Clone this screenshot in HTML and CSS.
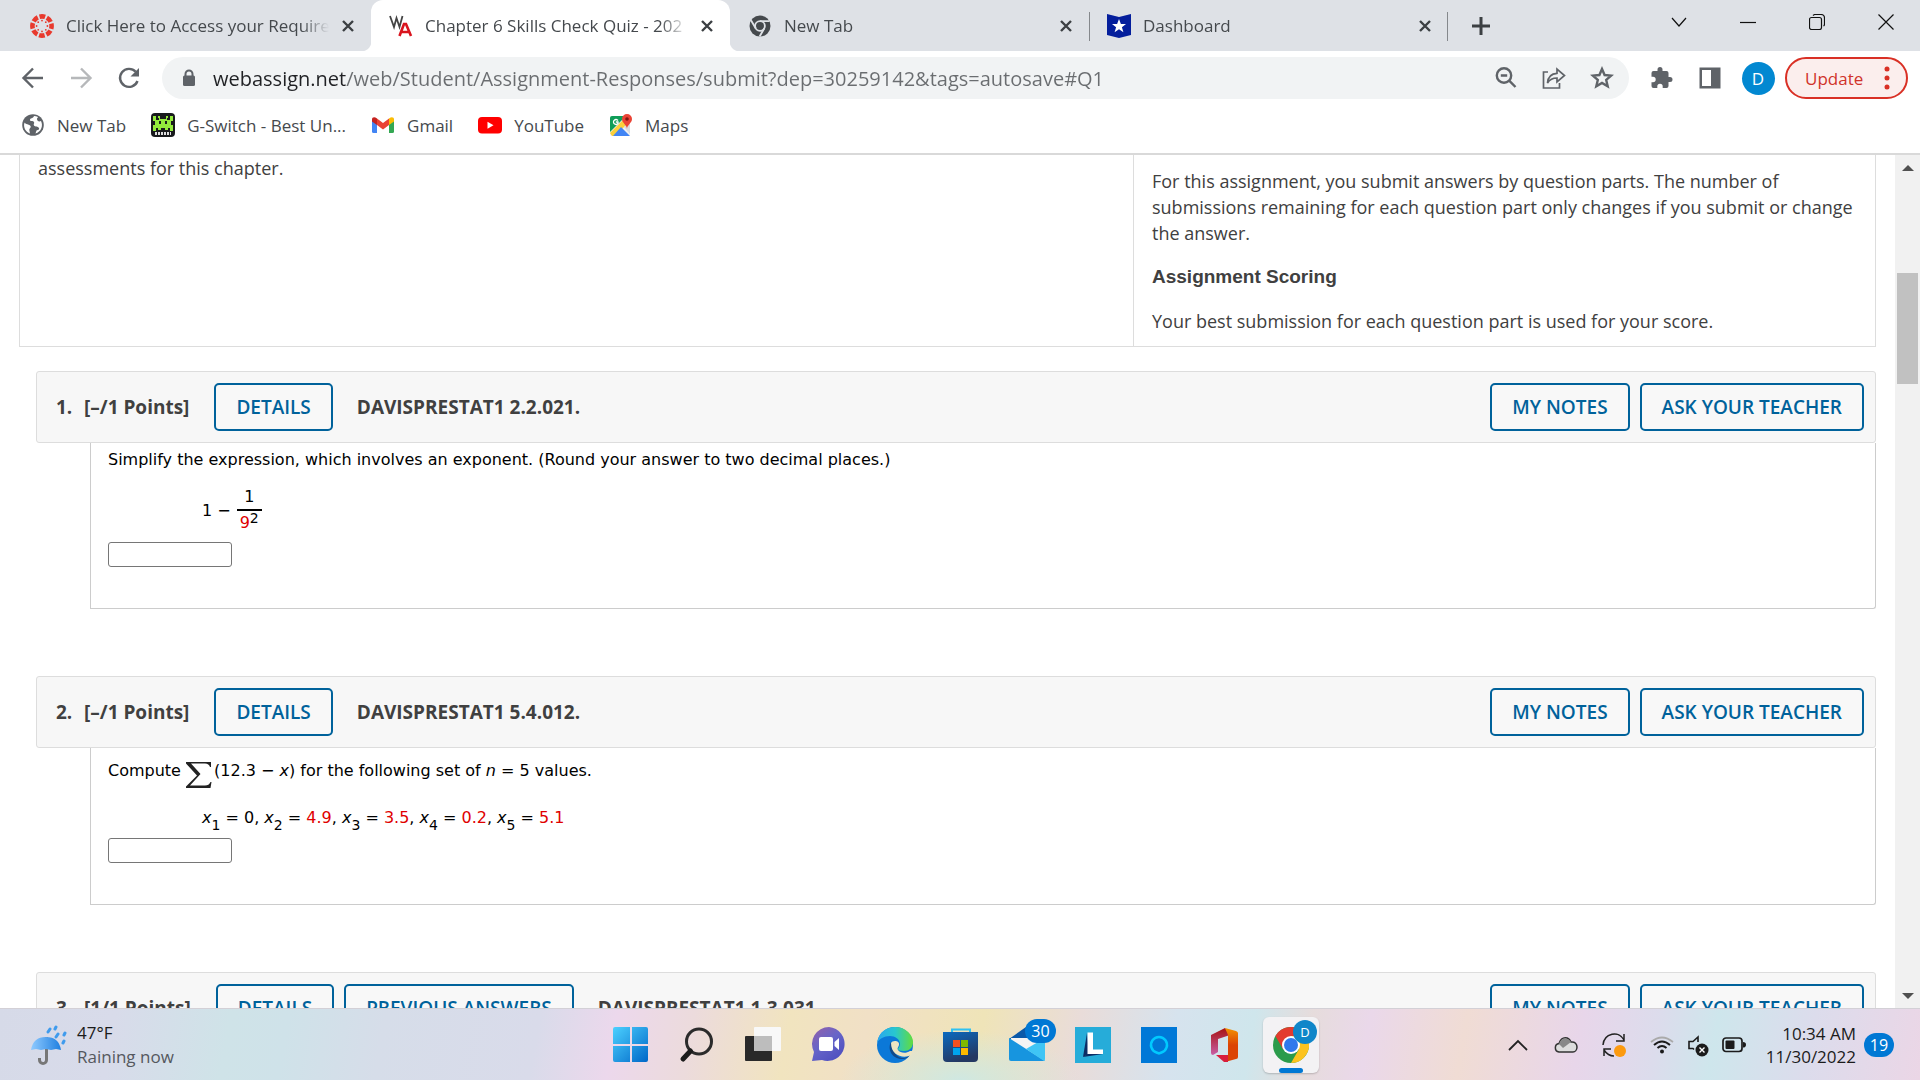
FILE: index.html
```html
<!DOCTYPE html>
<html lang="en">
<head>
<meta charset="utf-8">
<title>Chapter 6 Skills Check Quiz</title>
<link rel="stylesheet" href="styles.css">
</head>
<body>
<header class="browser">
  <nav class="tabstrip" aria-label="Tabs">
    <div class="tab">
      <svg class="icon24" viewBox="0 0 24 24"><circle cx="12" cy="12" r="9.6" fill="none" stroke="#e8392d" stroke-width="4.600" stroke-dasharray="5.700 1.840" stroke-dashoffset="2.800"/><g fill="#e8392d"><circle cx="12" cy="6.600" r=".9"/><circle cx="12" cy="17.400" r=".9"/><circle cx="6.600" cy="12" r=".9"/><circle cx="17.400" cy="12" r=".9"/><circle cx="8.200" cy="8.200" r=".9"/><circle cx="15.800" cy="8.200" r=".9"/><circle cx="8.200" cy="15.800" r=".9"/><circle cx="15.800" cy="15.800" r=".9"/></g></svg>
      <span class="tab-title">Click Here to Access your Require</span>
      <button class="tab-close" aria-label="Close tab"><svg viewBox="0 0 14 14"><path d="M2 2l10 10M12 2L2 12"/></svg></button>
    </div>
    <div class="tab active">
      <svg class="icon24" viewBox="0 0 24 24"><path d="M1 2l4 11 2.500-9 3 9 3-11" fill="none" stroke="#444" stroke-width="1.800"/><path d="M10.500 22l4.500-12h2l5 12M12 18h8" fill="none" stroke="#d9141e" stroke-width="2.600"/></svg>
      <span class="tab-title">Chapter 6 Skills Check Quiz - 202</span>
      <button class="tab-close" aria-label="Close tab"><svg viewBox="0 0 14 14"><path d="M2 2l10 10M12 2L2 12"/></svg></button>
    </div>
    <div class="tab">
      <svg class="icon24" viewBox="0 0 24 24"><circle cx="12" cy="12" r="10.500" fill="#45494d"/><circle cx="12" cy="12" r="4.900" fill="none" stroke="#dee1e6" stroke-width="1.800"/><path d="M12 7.100h9.500M7.800 14.500L3 6.300M16.200 14.500L11.600 22.500" stroke="#dee1e6" stroke-width="1.800"/></svg>
      <span class="tab-title">New Tab</span>
      <button class="tab-close" aria-label="Close tab"><svg viewBox="0 0 14 14"><path d="M2 2l10 10M12 2L2 12"/></svg></button>
    </div>
    <div class="tab divided">
      <svg class="icon24" viewBox="0 0 24 24"><path d="M0 0l12 3 12-3v21l-12 3-12-3z" fill="#041e9c"/><path d="M12 5l1.900 5h5.100l-4.100 3.200 1.500 5.100-4.400-3-4.400 3 1.500-5.100L5 10h5.100z" fill="#fff"/></svg>
      <span class="tab-title">Dashboard</span>
      <button class="tab-close" aria-label="Close tab"><svg viewBox="0 0 14 14"><path d="M2 2l10 10M12 2L2 12"/></svg></button>
    </div>
    <button class="new-tab" aria-label="New tab"><svg viewBox="0 0 18 18"><path d="M9 0v18M0 9h18"/></svg></button>
    <div class="window-controls">
      <button aria-label="Search tabs"><svg viewBox="0 0 16 16"><path d="M1 4l7 8 7-8"/></svg></button>
      <button aria-label="Minimize"><svg viewBox="0 0 16 16"><path d="M0 8.500h16"/></svg></button>
      <button aria-label="Restore"><svg viewBox="0 0 16 16"><rect x=".5" y="3.500" width="12" height="12" rx="2"/><path d="M4 1.500q1-1 2-1h6q3.500 0 3.500 3.500v6q0 1.500-1 2"/></svg></button>
      <button aria-label="Close"><svg viewBox="0 0 16 16"><path d="M.5.5l15 15M15.500.5l-15 15"/></svg></button>
    </div>
  </nav>

  <div class="toolbar">
    <button class="tool" aria-label="Back"><svg viewBox="0 0 24 24"><path class="line" d="M22 12H3M12 2.500L2.500 12l9.500 9.500"/></svg></button>
    <button class="tool faded" aria-label="Forward"><svg viewBox="0 0 24 24"><path class="line" d="M2 12h19M12 2.500l9.500 9.500-9.500 9.500"/></svg></button>
    <button class="tool" aria-label="Reload"><svg viewBox="0 0 24 24"><path class="line" d="M20.500 15a9 9 0 1 1-1.800-9.200"/><path class="solid" d="M22 2v8.500h-8.500z"/></svg></button>
    <div class="omnibox">
      <svg class="lock" viewBox="0 0 14 18"><path d="M3.500 8V5a3.500 3.500 0 0 1 7 0v3" fill="none" stroke="#5f6368" stroke-width="2"/><rect x="1" y="6.500" width="12" height="10.500" rx="1.500" fill="#5f6368"/></svg>
      <input class="url" type="text" aria-label="Address" value="webassign.net/web/Student/Assignment-Responses/submit?dep=30259142&amp;tags=autosave#Q1">
      <button class="tool" aria-label="Zoom"><svg viewBox="0 0 24 24"><circle class="line" cx="10" cy="9.500" r="7.200"/><path class="line" d="M15.200 14.700l6.300 6.300M6.800 9.500h6.400"/></svg></button>
      <button class="tool" aria-label="Share"><svg viewBox="0 0 24 24"><path class="thin" d="M6 6H1.500v16h16v-5"/><path class="thin" d="M5.500 17c.5-6 4-9.500 9.500-9.700V3l7.500 6.500-7.500 6.500v-4c-4 0-7 1-9.500 5z"/></svg></button>
      <button class="tool" aria-label="Bookmark"><svg viewBox="0 0 24 24"><path class="line" d="M12 3l2.600 6 6.500.6-4.900 4.300 1.500 6.400-5.700-3.400-5.700 3.400 1.500-6.400-4.900-4.300 6.500-.6z"/></svg></button>
    </div>
    <button class="tool" aria-label="Extensions"><svg viewBox="0 0 24 24"><path class="solid" d="M20 11h-1.500V7a2 2 0 0 0-2-2h-4V3.500a2.500 2.500 0 0 0-5 0V5h-4a2 2 0 0 0-2 2v3.800H3a2.700 2.700 0 0 1 0 5.400H1.500V20a2 2 0 0 0 2 2h3.800v-1.500a2.700 2.700 0 0 1 5.400 0V22h3.800a2 2 0 0 0 2-2v-4H20a2.500 2.500 0 0 0 0-5z"/></svg></button>
    <button class="tool" aria-label="Side panel"><svg viewBox="0 0 24 24"><path class="solid" fill-rule="evenodd" d="M1.500 1.500h21v21h-21zM4 4v16h9V4z"/></svg></button>
    <button class="tool" aria-label="Profile"><span class="avatar">D</span></button>
    <button class="update">Update<svg viewBox="0 0 6 24"><circle cx="3" cy="3" r="2.500"/><circle cx="3" cy="12" r="2.500"/><circle cx="3" cy="21" r="2.500"/></svg></button>
  </div>

  <nav class="bookmarks" aria-label="Bookmarks">
    <a href="#newtab"><svg class="icon24" viewBox="0 0 24 24"><circle cx="12" cy="12" r="10.800" fill="#5f6368"/><path d="M3.500 9.500c1 2 4.500 1.500 6 3.500 1 2-2 2-1 5l.5 2.500C4.500 19 2 14 3.500 9.500zM13 3c-1 3-4 1.500-4 4 0 2 3 .5 4 2 .8 1.500-1 2 0 3.500s4 .5 5 2.500c.7 1.500-1 2-2.500 2.500l-1 3C20 19 22.500 13 20 8c-2 1-4 0-4-2 0-1 1-1.500 1-2q-2-1-4-1z" fill="#fff"/></svg>New Tab</a>
    <a href="#gswitch"><svg class="icon24" viewBox="0 0 24 24"><rect width="24" height="24" rx="4" fill="#18191c"/><path d="M2 3h3v4h3V5H7V3h2v3h6V3h2v2h-1v2h3V3h3v5h-2v4h2v6h-3v-3h-2v2h-3v-2h-4v2H7v-2H5v3H2v-6h2V8H2z" fill="#93ea3c"/><path d="M8 8h2v3H8zm6 0h2v3h-2z" fill="#18191c"/><path d="M4 20.500h16" stroke="#ddd" stroke-width="3" stroke-dasharray="2 1"/></svg>G-Switch - Best Un...</a>
    <a href="#gmail"><svg class="icon24" viewBox="0 0 24 24"><path d="M1 6v12.500Q1 20 2.500 20H6V9z" fill="#4285f4"/><path d="M18 9v11h3.500q1.500 0 1.500-1.500V6z" fill="#34a853"/><path d="M6 5.500l6 4.500 6-4.500V12l-6 4.500L6 12z" fill="#ea4335"/><path d="M1 6.500C1 4 3.500 3.500 6 5.500V12L1 8.500z" fill="#c5221f"/><path d="M23 6.500c0-2.500-2.500-3-5-1V12l5-3.500z" fill="#fbbc04"/></svg>Gmail</a>
    <a href="#youtube"><svg class="icon24" viewBox="0 0 24 24"><rect y="4" width="24" height="16.500" rx="4" fill="red"/><path d="M9.500 8.700v7l6-3.500z" fill="#fff"/></svg>YouTube</a>
    <a href="#maps"><svg class="icon24" viewBox="0 0 24 24"><rect x="1" y="3" width="20" height="20" rx="2" fill="#f1f1f1"/><path d="M3 3h14L1 19V5q0-2 2-2z" fill="#0f9d58"/><path d="M1 20L17 4l4 4L6 23H3z" fill="#fbd03b"/><path d="M12 14l9 9H4z" fill="#4285f4"/><path d="M21 10v11l-6-7z" fill="#dadce0"/><path d="M18 16c0-4-5-6-5-10a5 5 0 0 1 10 0c0 4-5 6-5 10z" fill="#ea4335"/><circle cx="18" cy="6" r="1.800" fill="#811411"/><path d="M9 7.500a2.500 2.500 0 1 0 0 3V9H6.800" fill="none" stroke="#fff" stroke-width="1.300"/></svg>Maps</a>
  </nav>
</header>

<div class="viewport">
  <main class="page">
    <section class="intro">
      <div class="intro-left"><p>assessments for this chapter.</p></div>
      <div class="intro-right">
        <p>For this assignment, you submit answers by question parts. The number of submissions remaining for each question part only changes if you submit or change the answer.</p>
        <h2>Assignment Scoring</h2>
        <p>Your best submission for each question part is used for your score.</p>
      </div>
    </section>

    <section class="question">
      <header class="q-head">
        <span class="q-num">1.</span><span class="q-points">[–/1 Points]</span>
        <div class="q-actions"><button class="btn">DETAILS</button></div>
        <h3>DAVISPRESTAT1 2.2.021.</h3>
        <div class="q-tools"><button class="btn">MY NOTES</button><button class="btn">ASK YOUR TEACHER</button></div>
      </header>
      <div class="q-body">
        <label class="prompt" for="answer1">Simplify the expression, which involves an exponent. (Round your answer to two decimal places.)</label>
        <div class="expression">1 −<span class="fraction"><span class="numerator">1</span><span class="denominator"><span class="given">9</span><sup>2</sup></span></span></div>
        <input class="answer" id="answer1" type="text">
      </div>
    </section>

    <section class="question">
      <header class="q-head">
        <span class="q-num">2.</span><span class="q-points">[–/1 Points]</span>
        <div class="q-actions"><button class="btn">DETAILS</button></div>
        <h3>DAVISPRESTAT1 5.4.012.</h3>
        <div class="q-tools"><button class="btn">MY NOTES</button><button class="btn">ASK YOUR TEACHER</button></div>
      </header>
      <div class="q-body">
        <label class="prompt tall" for="answer2">Compute <svg class="sigma" viewBox="0 0 26 26"><path d="M0 0h25v5h-1q-1-3.500-5-3.500H5L14.500 12 4 23.500h15q4 0 5.500-3.500h1l-1 6H0v-1.500L11 13.500 0 1.500z" fill="#222"/></svg>(12.3 − <i>x</i>) for the following set of <i>n</i> = 5 values.</label>
        <div class="values"><i>x</i><sub>1</sub> = 0, <i>x</i><sub>2</sub> = <span class="given">4.9</span>, <i>x</i><sub>3</sub> = <span class="given">3.5</span>, <i>x</i><sub>4</sub> = <span class="given">0.2</span>, <i>x</i><sub>5</sub> = <span class="given">5.1</span></div>
        <input class="answer" id="answer2" type="text">
      </div>
    </section>

    <section class="question">
      <header class="q-head">
        <span class="q-num">3.</span><span class="q-points">[1/1 Points]</span>
        <div class="q-actions"><button class="btn">DETAILS</button><button class="btn">PREVIOUS ANSWERS</button></div>
        <h3>DAVISPRESTAT1 1.3.031.</h3>
        <div class="q-tools"><button class="btn">MY NOTES</button><button class="btn">ASK YOUR TEACHER</button></div>
      </header>
    </section>
  </main>
  <div class="scrollbar" aria-hidden="true">
    <span class="arrow up"></span><span class="track-before"></span><span class="thumb"></span><span class="track-after"></span><span class="arrow down"></span>
  </div>
</div>

<footer class="taskbar">
  <div class="weather">
    <svg viewBox="0 0 36 40"><defs><linearGradient id="umb"><stop offset="0" stop-color="#8fcaff"/><stop offset="1" stop-color="#1e7fe0"/></linearGradient></defs><path d="M15.500 12v23a3.500 3.500 0 0 1-7 0v-2" fill="none" stroke="#777" stroke-width="3"/><path d="M0 25Q2 12 15 12t15 13l-5-1-5 1-5-1-5 1-5-1z" fill="url(#umb)"/><path d="M17 7l2-3M24 4l1-2M25 12l2-3M33 10l1-2M32 18l1-2" stroke="#3f9bed" stroke-width="3" stroke-linecap="round"/></svg>
    <div><div class="temp">47°F</div><div class="condition">Raining now</div></div>
  </div>
  <div class="apps">
    <button aria-label="Start"><svg viewBox="0 0 36 36"><defs><linearGradient id="win" x2="1" y2="1"><stop stop-color="#4cd1ff"/><stop offset="1" stop-color="#0067c8"/></linearGradient></defs><path d="M2 0h15v17H0V2q0-2 2-2zm17 0h14q2 0 2 2v15H19zM0 19h17v16H2q-2 0-2-2zm19 0h16v14q0 2-2 2H19z" fill="url(#win)"/></svg></button>
    <button aria-label="Search"><svg viewBox="0 0 36 36"><circle cx="20" cy="14.500" r="12.500" fill="none" stroke="#2b2b2b" stroke-width="3"/><path d="M11.500 24L4 32" stroke="#1b1b1b" stroke-width="5" stroke-linecap="round"/></svg></button>
    <button aria-label="Task view"><svg viewBox="0 0 36 36"><rect y="9" width="27" height="25" rx="1" fill="#292929"/><rect x="9" width="27" height="24" rx="1" fill="#f8f8f8"/><path d="M9 9h18v15H9z" fill="#bdbdbd"/></svg></button>
    <button aria-label="Chat"><svg viewBox="0 0 36 36"><defs><linearGradient id="chat" x2=".7" y2="1"><stop stop-color="#9560a8"/><stop offset=".5" stop-color="#6765c8"/><stop offset="1" stop-color="#4f50c0"/></linearGradient></defs><path d="M18 0a17 17 0 1 1-7 33L1 34l2-9A17 17 0 0 1 18 0z" fill="url(#chat)"/><rect x="8" y="10" width="14" height="14" rx="2" fill="#fff"/><path d="M23.500 15l4.500-4v12l-4.500-4z" fill="#fff"/></svg></button>
    <button aria-label="Edge"><svg viewBox="0 0 36 36"><defs><linearGradient id="edge1"><stop stop-color="#2aa6f0"/><stop offset=".5" stop-color="#28c6d0"/><stop offset="1" stop-color="#62dd3c"/></linearGradient></defs><circle cx="18" cy="18" r="18" fill="#0b78d8"/><path d="M0 16C2 5 9 0 18 0c11 0 18 8 18 15 0 6-4 9-9 9-4 0-6-1-6-2s2-2 2-5c0-5-5-8-10-8C7 9 2 12 0 16z" fill="url(#edge1)"/><path d="M14 15c-4 7 1 17 11 17 4 0 7-2 8-5-5 8-17 3-16-7z" fill="#114a8b"/><path d="M14 16c1-3 9-3 8 2-1 3-2 3-1 5 2 3 8 4 12 1l3 0-2 4c-7 4-20 1-20-12z" fill="#eee5c2"/></svg></button>
    <button aria-label="Store"><svg viewBox="0 0 36 36"><defs><linearGradient id="store" x2=".4" y2="1"><stop stop-color="#0b6ac0"/><stop offset="1" stop-color="#243862"/></linearGradient></defs><path d="M9 7V2.500h18V7" fill="none" stroke="#2fc1f2" stroke-width="2"/><path d="M0 5h35v26q0 4-4 4H4q-4 0-4-4z" fill="url(#store)"/><path d="M10 13h7v7h-7z" fill="#f25022"/><path d="M18 13h7v7h-7z" fill="#7fba00"/><path d="M10 21h7v7h-7z" fill="#00a4ef"/><path d="M18 21h7v7h-7z" fill="#ffb900"/></svg></button>
    <button aria-label="Mail"><svg viewBox="0 0 36 36"><path d="M0 12L17 0l19 12z" fill="#0a59a9"/><path d="M2 11h32v14H2z" fill="#f4f4f4"/><path d="M0 11l36 23H2q-2 0-2-2z" fill="#1795df"/><path d="M36 11v21q0 2-1 2L17 22z" fill="#3fc5f5"/></svg><span class="count mail-count">30</span></button>
    <button aria-label="L"><svg viewBox="0 0 36 36"><path d="M0 0h36v36H0z" fill="#26acd9"/><path d="M12 6L8 30l6-3z" fill="#0c2d66"/><path d="M8 30l20-3H13z" fill="#0c2d66"/><path d="M12.500 5.500h5.500v17h10v4.500H12.500z" fill="#fff"/></svg></button>
    <button aria-label="Alexa"><svg viewBox="0 0 36 36"><path d="M0 0h36v36H0z" fill="#0078d7"/><path d="M15.500 25.500a8 8 0 1 1 5 0l-2.500 1z" fill="none" stroke="#00caff" stroke-width="2.500"/></svg></button>
    <button aria-label="Office"><svg viewBox="0 0 36 36"><defs><linearGradient id="off" x2="0" y2="1"><stop stop-color="#a71313"/><stop offset="1" stop-color="#c85fa5"/></linearGradient><linearGradient id="off2" x2="0" y2="1"><stop stop-color="#f39200"/><stop offset=".5" stop-color="#dc4404"/></linearGradient></defs><path d="M4 8L18 1l5 7-12 4v13l-5 3q-2 0-2-2z" fill="url(#off)"/><path d="M18 1l11 3q2 1 2 2v24q0 2-2 2l-11 3 3-7V8z" fill="url(#off2)"/><path d="M9 28h12v7h-4z" fill="#d81e3c"/></svg></button>
    <button class="running" aria-label="Chrome"><svg viewBox="0 0 36 36"><circle cx="18" cy="18" r="18" fill="#2b9b4b"/><path d="M2.400 9A18 18 0 0 1 33.600 9H18l-7.800 13.500z" fill="#e33b2e"/><path d="M33.600 9A18 18 0 0 1 18 36l7.800-13.500L18 9z" fill="#fcc31e"/><circle cx="18" cy="18" r="9" fill="#fff"/><circle cx="18" cy="18" r="7" fill="#3079ec"/></svg><span class="count profile-count">D</span></button>
  </div>
  <div class="tray">
    <svg viewBox="0 0 24 24"><path d="M3 17l9-9 9 9" fill="none" stroke="#222" stroke-width="1.800"/></svg>
    <svg viewBox="0 0 24 24"><path d="M5 19a4.300 4.300 0 0 1 0-8.500C8 2 15 4 17 9c4-.5 6 2 6 5 0 3-2 5-4 5z" fill="#ddd" stroke="#333" stroke-width="1.500"/><path d="M5 11c2-7 9-7 12-2l-8 6z" fill="#888"/></svg>
    <svg viewBox="0 0 24 24"><path d="M1 12C2 0 17-3 22 7M22 1v7h-8M12 23q-6 0-10-6M2 23v-7h7" fill="none" stroke="#222" stroke-width="1.500"/><circle cx="18" cy="18" r="6" fill="#fc9a0f"/></svg>
    <button class="network" aria-label="Network, sound and battery">
      <svg viewBox="0 0 24 24"><path d="M1 9q11-9 22 0" fill="none" stroke="#aaa" stroke-width="1.700"/><path d="M4 12q8-7 16 0M7.500 15q4.500-4 9 0" fill="none" stroke="#1b1b1b" stroke-width="2"/><circle cx="12" cy="18.500" r="2" fill="#1b1b1b"/></svg>
      <svg viewBox="0 0 24 24"><path d="M12 9V4L7 8.500H3v7h4l1 1" fill="none" stroke="#1b1b1b" stroke-width="1.600"/><circle cx="16" cy="17" r="6.500" fill="#1b1b1b"/><path d="M13.500 14.500l5 5m0-5l-5 5" stroke="#fff" stroke-width="1.400"/></svg>
      <svg viewBox="0 0 24 24"><rect x="1" y="5" width="19" height="13.500" rx="3" fill="none" stroke="#1b1b1b" stroke-width="1.700"/><rect x="3.500" y="7.500" width="9" height="8.500" rx="1" fill="#1b1b1b"/><path d="M21 9q3 0 3 2.800t-3 2.800z" fill="#1b1b1b"/></svg>
    </button>
    <div class="clock"><time>10:34 AM</time><time>11/30/2022</time></div>
    <span class="count notices">19</span>
  </div>
</footer>
</body>
</html>
```
FILE: styles.css
```css
* { box-sizing: border-box; }

body {
  margin: 0;
  height: 100vh;
  display: flex;
  flex-direction: column;
  overflow: hidden;
  background: #fff;
  color: #404040;
  font-family: "Open Sans", "Noto Sans", sans-serif;
  font-size: 17px;
}

button {
  border: 0;
  padding: 0;
  background: none;
  color: inherit;
  font: inherit;
}

svg { display: block; flex: none; }
p, h2, h3 { margin: 0; }
.icon24 { width: 24px; height: 24px; }

/* Browser chrome */
.browser {
  flex: none;
  border-bottom: 2px solid #d9d9d9;
}

.tabstrip {
  display: flex;
  align-items: stretch;
  height: 51px;
  padding-left: 12px;
  background: #dee1e6;
}

.tab {
  position: relative;
  flex: 0 1 359px;
  display: flex;
  align-items: center;
  gap: 12px;
  min-width: 0;
  padding: 0 16px 0 18px;
  color: #45494d;
}

.tab.active {
  background: #fff;
  border-radius: 12px 12px 0 0;
}

.tab.active::before,
.tab.active::after {
  content: "";
  position: absolute;
  bottom: 0;
  width: 10px;
  height: 10px;
}

.tab.active::before { left: -10px; background: radial-gradient(circle at 0 0, #dee1e6 10px, #fff 11px); }
.tab.active::after { right: -10px; background: radial-gradient(circle at 100% 0, #dee1e6 10px, #fff 11px); }

.tab.divided::before,
.tab.divided::after {
  content: "";
  position: absolute;
  top: 12px;
  bottom: 10px;
  width: 1px;
  background: #85888c;
}

.tab.divided::before { left: 0; }
.tab.divided::after { right: 0; }

.tab-title {
  flex: 1;
  min-width: 0;
  overflow: hidden;
  white-space: nowrap;
  mask-image: linear-gradient(to left, transparent, #000 28px);
}

.tab-close svg { width: 14px; height: 14px; stroke: #3c4043; stroke-width: 2.4; }
.new-tab { width: 66px; display: grid; place-items: center; }
.new-tab svg { width: 18px; height: 18px; stroke: #3c4043; stroke-width: 3; }

.window-controls {
  margin-left: auto;
  display: flex;
  height: 44px;
}

.window-controls button { width: 69px; display: grid; place-items: center; }
.window-controls svg { width: 16px; height: 16px; fill: none; stroke: #111; stroke-width: 1.2; }

.toolbar {
  display: flex;
  align-items: center;
  height: 54px;
  padding: 0 12px 0 9px;
}

.tool { flex: none; width: 48px; height: 42px; display: grid; place-items: center; }
.tool svg { width: 24px; height: 24px; }
.line { fill: none; stroke: #5f6368; stroke-width: 2.4; }
.thin { fill: none; stroke: #5f6368; stroke-width: 1.7; }
.solid { fill: #5f6368; }
.faded { opacity: .45; }

.omnibox {
  flex: 1;
  display: flex;
  align-items: center;
  height: 42px;
  margin: 0 9px;
  padding: 0 3px 0 20px;
  border-radius: 21px;
  background: #f1f3f4;
}

.lock { width: 14px; height: 18px; }

.url {
  flex: 1;
  min-width: 0;
  margin-left: 17px;
  padding: 0;
  border: 0;
  font: 20px "Open Sans", "Noto Sans", sans-serif;
  color: #5f6368;
  background: linear-gradient(to right, #202124 133px, #6a6d70 133px);
  background-clip: text;
  -webkit-background-clip: text;
  -webkit-text-fill-color: transparent;
}

.avatar {
  width: 33px;
  height: 33px;
  border-radius: 50%;
  background: #0288d1;
  color: #fff;
  line-height: 33px;
}

.update {
  display: flex;
  align-items: center;
  justify-content: space-between;
  width: 123px;
  height: 42px;
  margin-left: 3px;
  padding: 0 16px 0 18px;
  border: 2px solid #d93025;
  border-radius: 21px;
  background: #fbeeed;
  color: #d0332a;
}

.update svg { width: 6px; height: 24px; fill: #d93025; }

.bookmarks {
  display: flex;
  align-items: center;
  gap: 25px;
  height: 40px;
  margin-bottom: 8px;
  padding: 0 21px;
}

.bookmarks a {
  display: flex;
  align-items: center;
  gap: 12px;
  color: #45494d;
  text-decoration: none;
  white-space: nowrap;
}

/* Assignment page */
.viewport {
  flex: 1;
  min-height: 0;
  display: flex;
  overflow: hidden;
}

.page { flex: 1; min-width: 0; padding: 0 19px; }

.intro {
  display: grid;
  grid-template-columns: 3fr 2fr;
  border: 1px solid #ddd;
  border-top: 0;
  font-size: 18px;
  line-height: 26px;
}

.intro-left { padding-left: 18px; }
.intro-right { padding: 13px 20px 12px 18px; border-left: 1px solid #ddd; }

.intro h2 {
  margin: 17px 0 18px;
  font: bold 19px/27px "Liberation Sans", Arial, sans-serif;
}

.question { margin: 24px 0 67px 17px; }
.question + .question { margin-top: 0; }

.q-head {
  display: flex;
  align-items: center;
  height: 72px;
  padding: 0 11px 0 19px;
  border: 1px solid #ddd;
  border-radius: 3px;
  background: #f7f7f7;
  font-size: 19px;
  font-weight: 700;
}

.q-num { width: 28px; }
.q-points { margin-right: 25px; }
.q-actions, .q-tools { display: flex; gap: 10px; }
.q-tools { margin-left: auto; }

.q-head h3 { margin-left: 24px; font-size: 19px; font-weight: 700; }

.btn {
  height: 48px;
  padding: 0 20px;
  border: 2px solid #00629b;
  border-radius: 5px;
  background: #f8f8f8;
  color: #00629b;
  font-size: 19px;
  font-weight: 600;
  white-space: nowrap;
}

.q-body {
  margin-left: 54px;
  padding: 0 17px 41px;
  border: 1px solid #ccc;
  border-top: 0;
  border-radius: 0 0 3px 0;
  color: #000;
  font: 16px Verdana, "DejaVu Sans", sans-serif;
}

.prompt { display: block; line-height: 34px; }
.prompt.tall { padding-top: 8px; line-height: 30px; }
.sigma { display: inline-block; width: 26px; height: 26px; margin-right: 2px; vertical-align: -12px; }
.given { color: #e00000; }

.expression {
  display: flex;
  align-items: center;
  gap: 6px;
  margin: 8px 0 7px 94px;
}

.fraction { display: grid; text-align: center; line-height: 24px; }
.numerator { border-bottom: 2px solid #000; }
.denominator { padding: 0 3px; }
sup, sub { font-size: 14px; line-height: 0; }
sup { vertical-align: 5px; }
sub { vertical-align: -7px; }

.values { margin: 16px 0 6px 94px; line-height: 28px; }

.answer {
  display: block;
  width: 124px;
  height: 25px;
  border: 1px solid #767676;
  border-radius: 3px;
  background: #fff;
}

.scrollbar {
  flex: none;
  width: 25px;
  display: flex;
  flex-direction: column;
  align-items: center;
  background: #f1f1f1;
}

.arrow { flex: none; height: 25px; display: grid; place-items: center; }
.arrow::before { content: ""; border: 6px solid transparent; }
.arrow.up::before { border-top: 0; border-bottom-color: #505050; }
.arrow.down::before { border-bottom: 0; border-top-color: #505050; }
.track-before { flex: 93; }
.thumb { flex: 111; width: 21px; background: #c1c1c1; }
.track-after { flex: 599; }

/* Taskbar */
.taskbar {
  flex: none;
  display: grid;
  grid-template-columns: 1fr auto 1fr;
  align-items: center;
  height: 72px;
  border-top: 1px solid #d3d0d6;
  background:
    radial-gradient(ellipse 120px 50px at 50% 100%, #cfe8e2, transparent),
    linear-gradient(100deg, #d6dae8 0%, #d8dbea 6%, #cfe3e8 12%, #cfe2e9 15%, #d6dde9 20%, #d9dbea 28%, #ecd8ec 32%, #ecdbdc 36%, #f1e4bf 41%, #f1e0c6 45%, #efe4b8 51%, #e9dcd9 56%, #d6e3ee 61%, #cfe6ec 65%, #e6dcdc 68%, #ead8ea 71%, #f0dcd4 76%, #e8d6ea 82%, #dcdcec 86%, #cee6ec 89%, #dcdcec 94%, #ebd6e6 100%);
  color: #1b1b1b;
}

.weather {
  display: flex;
  align-items: center;
  gap: 10px;
  padding-left: 31px;
  line-height: 24px;
}

.weather svg { width: 36px; height: 40px; }
.condition { color: #55585e; }
.apps { display: flex; padding-left: 2px; }

.apps button {
  position: relative;
  width: 56px;
  height: 56px;
  margin: 0 5px;
  display: grid;
  place-items: center;
  border-radius: 6px;
}

.apps svg { width: 36px; height: 36px; }
.apps .running { background: #f3f2f4; box-shadow: 0 1px 2px #0003; }

.running::after {
  content: "";
  position: absolute;
  bottom: 0;
  left: 16px;
  width: 24px;
  height: 5px;
  border-radius: 3px;
  background: #0078d4;
}

.count {
  height: 24px;
  border-radius: 12px;
  background: #0078d4;
  color: #fff;
  font-size: 16px;
  line-height: 24px;
  text-align: center;
}

.mail-count { position: absolute; top: 2px; left: 26px; width: 31px; }
.profile-count { position: absolute; top: 3px; right: 2px; width: 24px; background: #0f86c9; font-size: 13px; }

.tray {
  display: flex;
  align-items: center;
  justify-content: flex-end;
  gap: 24px;
  padding-right: 26px;
}

.tray svg { width: 24px; height: 24px; }
.network { display: flex; gap: 12px; }
.clock { display: grid; margin: 0 -16px 0 -4px; line-height: 23px; text-align: right; }
.notices { width: 30px; }
```
